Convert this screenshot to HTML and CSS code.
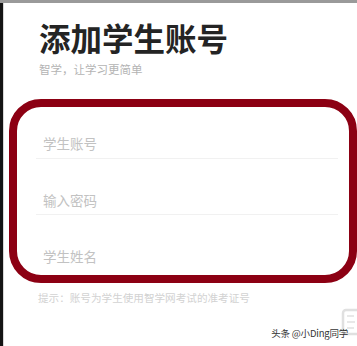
FILE: index.html
```html
<!DOCTYPE html>
<html lang="zh-CN">
<head>
<meta charset="utf-8">
<link rel="stylesheet" href="styles.css">
</head>
<body>
<div class="screen">
  <div class="topbar"></div>
  <div class="body">
    <div class="leftbar"></div>
    <div class="main">
      <h1 class="title">添加学生账号</h1>
      <p class="subtitle">智学，让学习更简单</p>
      <div class="card">
        <div class="row"><span class="ph">学生账号</span></div>
        <div class="row"><span class="ph">输入密码</span></div>
        <div class="row last"><span class="ph">学生姓名</span></div>
      </div>
      <p class="hint">提示：账号为学生使用智学网考试的准考证号</p>
    </div>
  </div>
  <svg class="ghost" width="20" height="28" viewBox="0 0 20 28">
    <rect x="3" y="2" width="17" height="24" rx="3" fill="none" stroke="#e0e0e0" stroke-width="2.5"/>
    <path d="M7 8 H14 M7 14 H15 M7 20 H14" stroke="#e8e8e8" stroke-width="2" fill="none"/>
  </svg>
  <div class="watermark">头条 @小Ding同学</div>
</div>
</body>
</html>
```
FILE: styles.css
```css
html, body {
  margin: 0;
  padding: 0;
  background: #fff;
}
.screen {
  position: relative;
  width: 357px;
  height: 346px;
  overflow: hidden;
  font-family: "Noto Sans CJK SC", "Noto Sans", sans-serif;
  display: flex;
  flex-direction: column;
}
.topbar {
  height: 3px;
  background: #9a9a9a;
  flex: none;
}
.body {
  flex: 1;
  display: flex;
}
.leftbar {
  width: 3px;
  background: #141414;
  border-right: 1px solid #d8d8d8;
  flex: none;
}
.main {
  flex: 1;
  display: flex;
  flex-direction: column;
  padding-top: 16px;
}
.title {
  margin: 0 0 0 35px;
  font-size: 31.5px;
  line-height: 36px;
  font-weight: 700;
  color: #242424;
  letter-spacing: 0;
}
.subtitle {
  margin: 7px 0 0 35px;
  font-size: 11.5px;
  line-height: 14px;
  color: #b4b4b4;
}
.card {
  margin: 23px 0 0 5px;
  width: 348px;
  box-sizing: border-box;
  height: 184px;
  border: 8px solid #8c0013;
  border-radius: 32px;
  padding: 0 11px 0 19px;
  display: flex;
  flex-direction: column;
}
.row {
  padding: 31px 0 4px 7px;
  border-bottom: 1px solid #f1f1f1;
}
.row:first-child {
  padding-top: 26px;
  padding-bottom: 5px;
}
.row.last {
  border-bottom: none;
}
.ph {
  display: block;
  font-size: 13.5px;
  line-height: 20px;
  color: #c2c2c2;
}
.hint {
  margin: 8px 0 0 34px;
  font-size: 10.6px;
  line-height: 14px;
  color: #d2d2d2;
}
.ghost {
  position: absolute;
  right: -3px;
  top: 308px;
}
.watermark {
  position: absolute;
  right: 9px;
  top: 326px;
  font-size: 9.5px;
  line-height: 14px;
  color: #333;
  white-space: nowrap;
  letter-spacing: -0.2px;
}
```
